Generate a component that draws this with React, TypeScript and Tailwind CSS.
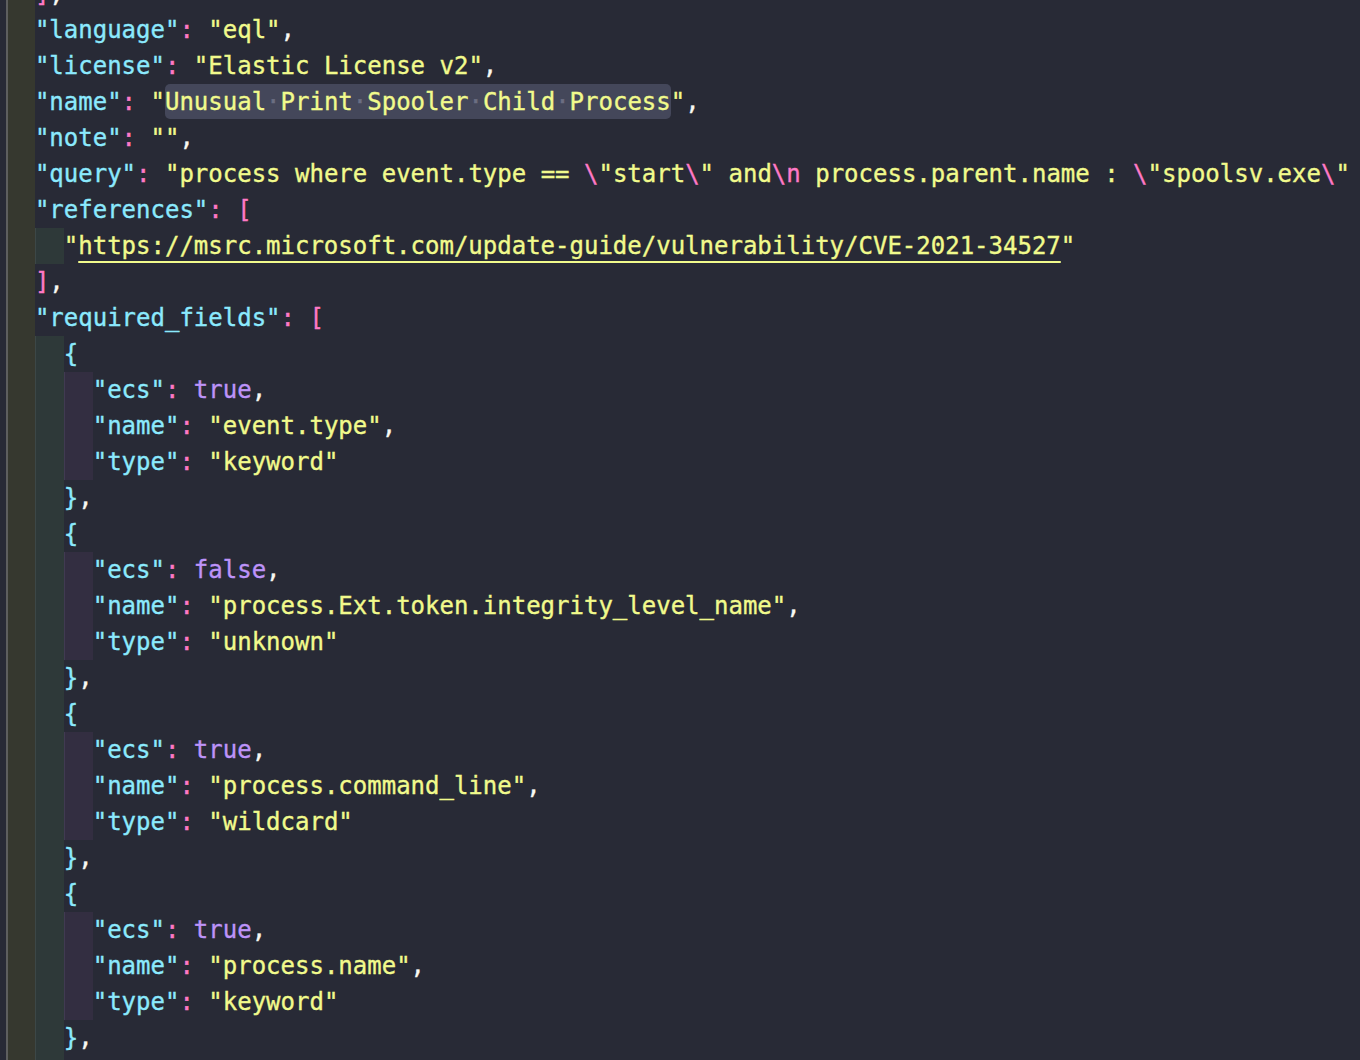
import React from "react";

const cyan = "text-[#8be9fd]";
const pink = "text-[#ff79c6]";
const yellow = "text-[#f1fa8c]";
const purple = "text-[#bd93f9]";
const white = "text-[#f8f8f2]";

const Key = ({ name }: { name: string }) => (
  <>
    <span className={cyan}>"{name}"</span>
    <span className={pink}>: </span>
  </>
);

const Str = ({ v }: { v: string }) => <span className={yellow}>"{v}"</span>;
const Comma = () => <span className={white}>,</span>;

type Row = { guides: number; body: React.ReactNode };

const field = (name: string, value: React.ReactNode, last = false): Row => ({
  guides: 3,
  body: (
    <>
      <Key name={name} />
      {value}
      {!last && <Comma />}
    </>
  ),
});

const reqField = (ecs: boolean, name: string, type: string): Row[] => [
  { guides: 2, body: <span className={cyan}>{"{"}</span> },
  field("ecs", <span className={purple}>{ecs ? "true" : "false"}</span>),
  field("name", <Str v={name} />),
  field("type", <Str v={type} />, true),
  {
    guides: 2,
    body: (
      <>
        <span className={cyan}>{"}"}</span>
        <Comma />
      </>
    ),
  },
];

const rows: Row[] = [
  {
    guides: 1,
    body: (
      <>
        <span className={pink}>]</span>
        <Comma />
      </>
    ),
  },
  {
    guides: 1,
    body: (
      <>
        <Key name="language" />
        <Str v="eql" />
        <Comma />
      </>
    ),
  },
  {
    guides: 1,
    body: (
      <>
        <Key name="license" />
        <Str v="Elastic License v2" />
        <Comma />
      </>
    ),
  },
  {
    guides: 1,
    body: (
      <>
        <Key name="name" />
        <span className={yellow}>"</span>
        <span className={`${yellow} h-[35px] self-start rounded-[5px] bg-[#44475a]`}>
          Unusual<span className="text-[#6b6e82]">·</span>Print
          <span className="text-[#6b6e82]">·</span>Spooler
          <span className="text-[#6b6e82]">·</span>Child
          <span className="text-[#6b6e82]">·</span>Process
        </span>
        <span className={yellow}>"</span>
        <Comma />
      </>
    ),
  },
  {
    guides: 1,
    body: (
      <>
        <Key name="note" />
        <Str v="" />
        <Comma />
      </>
    ),
  },
  {
    guides: 1,
    body: (
      <>
        <Key name="query" />
        <span className={yellow}>"process where event.type == </span>
        <span className={pink}>\</span>
        <span className={yellow}>"start</span>
        <span className={pink}>\</span>
        <span className={yellow}>" and</span>
        <span className={pink}>\n</span>
        <span className={yellow}> process.parent.name : </span>
        <span className={pink}>\</span>
        <span className={yellow}>"spoolsv.exe</span>
        <span className={pink}>\</span>
        <span className={yellow}>"</span>
      </>
    ),
  },
  {
    guides: 1,
    body: (
      <>
        <Key name="references" />
        <span className={pink}>[</span>
      </>
    ),
  },
  {
    guides: 2,
    body: (
      <>
        <span className={yellow}>"</span>
        <span className={`${yellow} underline decoration-[#f1fa8c] decoration-2 underline-offset-[7px]`}>
          https://msrc.microsoft.com/update-guide/vulnerability/CVE-2021-34527
        </span>
        <span className={yellow}>"</span>
      </>
    ),
  },
  {
    guides: 1,
    body: (
      <>
        <span className={pink}>]</span>
        <Comma />
      </>
    ),
  },
  {
    guides: 1,
    body: (
      <>
        <Key name="required_fields" />
        <span className={pink}>[</span>
      </>
    ),
  },
  ...reqField(true, "event.type", "keyword"),
  ...reqField(false, "process.Ext.token.integrity_level_name", "unknown"),
  ...reqField(true, "process.command_line", "wildcard"),
  ...reqField(true, "process.name", "keyword"),
  { guides: 2, body: <span className={cyan}>{"{"}</span> },
];

const Guides = ({ n }: { n: number }) => (
  <>
    <span className="w-[2ch] shrink-0 border-l-2 border-[#5e5f5f] bg-[#36382f]" />
    {n > 1 && <span className="w-[2ch] shrink-0 border-l border-[#3c4747] bg-[#2e3939]" />}
    {n > 2 && <span className="w-[2ch] shrink-0 border-l border-[#413a52] bg-[#332e41]" />}
  </>
);

const App = (): JSX.Element => {
  return (
    <div className="h-[1060px] w-[1360px] overflow-hidden bg-[#282a36] font-['DejaVu_Sans_Mono',Menlo,monospace] text-[24px] [-webkit-text-stroke:0.35px]">
      <div className="-mt-[24px] pl-[6px]">
        {rows.map((row, i) => (
          <div className="flex h-[36px] whitespace-pre leading-[36px]" key={i}>
            <Guides n={row.guides} />
            {row.body}
          </div>
        ))}
      </div>
    </div>
  );
};

export default App;
